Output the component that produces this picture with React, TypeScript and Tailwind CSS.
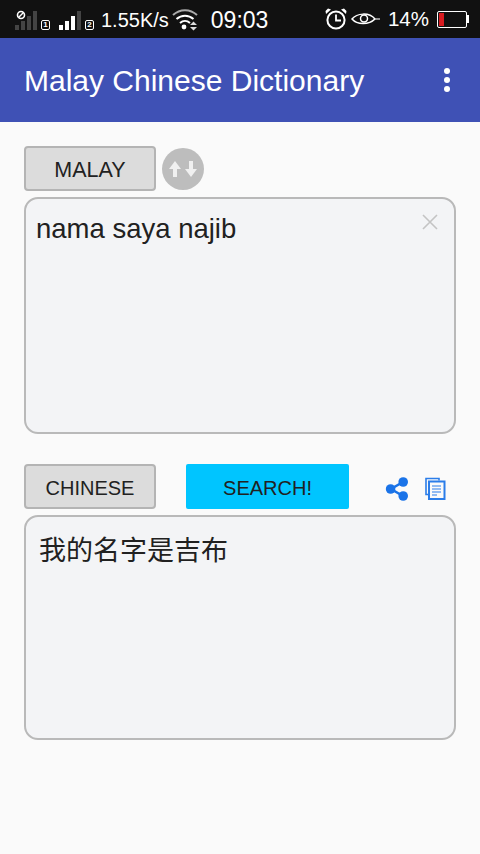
import React from "react";

const SANS = "font-['Liberation_Sans','Noto_Sans_CJK_SC',sans-serif]";

function SignalIcon({ sim, bars }: { sim: string; bars: number }) {
  const heights = [5, 9, 14, 19];
  return (
    <div className="flex items-end">
      <div className="flex items-end gap-[2px]">
        {heights.map((h, i) => (
          <svg key={i} width="4" height={h} className="block">
            <rect width="4" height={h} fill={i < bars ? "#ffffff" : "#444444"} />
          </svg>
        ))}
      </div>
      <span className="ml-[4px] flex h-[10px] w-[9px] items-center justify-center rounded-[2px] border border-white text-[8px] leading-none font-bold text-white">
        {sim}
      </span>
    </div>
  );
}

function StatusBar() {
  return (
    <div className={`relative flex h-[38px] items-center bg-[#111111] pr-[11px] pl-[15px] text-white ${SANS}`}>
      <svg width="10" height="10" viewBox="0 0 10 10" className="absolute top-[10px] left-[16px]">
        <circle cx="5" cy="5" r="3.5" fill="none" stroke="#fff" strokeWidth="1.6" />
        <path d="M2.5 7.5 7.5 2.5" stroke="#fff" strokeWidth="1.4" />
      </svg>
      <div className="mt-[2px]">
        <SignalIcon sim="1" bars={0} />
      </div>
      <div className="mt-[2px] ml-[9px]">
        <SignalIcon sim="2" bars={3} />
      </div>
      <span className="mt-[2px] ml-[7px] text-[20px] leading-none">1.55K/s</span>
      <svg width="28" height="24" viewBox="0 0 28 24" className="ml-[2px]">
        <path d="M2 8c7-6.5 17-6.5 24 0" fill="none" stroke="#aaa" strokeWidth="2" />
        <path d="M5.5 12c5-4.5 12-4.5 17 0" fill="none" stroke="#fff" strokeWidth="2" />
        <path d="M9 16c3-2.6 7-2.6 10 0" fill="none" stroke="#fff" strokeWidth="2" />
        <circle cx="13" cy="20" r="2.4" fill="#fff" />
        <path d="M19 18h7l-3.5-3.5zM19 20h7l-3.5 3.5z" fill="#ddd" />
      </svg>
      <span className="mt-[2px] ml-[12px] text-[23px] leading-none">09:03</span>
      <div className="ml-auto flex items-center">
        <svg width="24" height="24" viewBox="0 0 24 24">
          <circle cx="12" cy="13" r="8.6" fill="none" stroke="#fff" strokeWidth="2" />
          <path d="M12 7.5V13.5H17" fill="none" stroke="#fff" strokeWidth="1.8" />
          <path d="M2 7 7 2.5 4 1.5 1.5 4zM22 7 17 2.5 20 1.5 22.5 4z" fill="#fff" />
        </svg>
        <svg width="30" height="16" viewBox="0 0 30 16" className="ml-[3px]">
          <path d="M1 8C6 2 18 1 24 8 18 14 6 14 1 8Z" fill="none" stroke="#fff" strokeWidth="1.5" />
          <circle cx="13" cy="7.5" r="3.5" fill="none" stroke="#fff" strokeWidth="1.5" />
          <path d="M24 8h5" stroke="#bbb" strokeWidth="1.5" />
        </svg>
        <span className="ml-[7px] text-[20.5px] leading-none">14%</span>
        <div className="ml-[8px] flex items-center">
          <div className="flex h-[17px] w-[30px] items-stretch rounded-[2px] border border-white p-[1px]">
            <div className="w-[5px] bg-[#d81b20]" />
          </div>
          <div className="h-[8px] w-[2px] bg-white" />
        </div>
      </div>
    </div>
  );
}

function LangButton({ label, size }: { label: string; size: string }) {
  return (
    <div className={`flex h-[45px] w-[132px] items-center justify-center rounded-[4px] border-2 border-[#b4b4b4] bg-[#dcdcdc] pt-[3px] text-[#212121] ${size}`}>
      {label}
    </div>
  );
}

function SwapButton() {
  return (
    <div className="ml-[6px] flex h-[42px] w-[42px] items-center justify-center rounded-full bg-[#bdbdbd]">
      <svg width="30" height="18" viewBox="0 0 30 18">
        <path d="M7 1 1 9H5V17H9V9H13Z" fill="#f0f0f0" />
        <path d="M23 17 17 9H21V1H25V9H29Z" fill="#f0f0f0" />
      </svg>
    </div>
  );
}

function ShareIcon() {
  return (
    <svg width="24" height="24" viewBox="0 0 24 24">
      <path d="M18 5 6 12l12 7" fill="none" stroke="#1a73e8" strokeWidth="2.6" />
      <circle cx="18.2" cy="5" r="4.8" fill="#1a73e8" />
      <circle cx="5.6" cy="12" r="4.8" fill="#1a73e8" />
      <circle cx="18.2" cy="19" r="4.8" fill="#1a73e8" />
    </svg>
  );
}

function CopyIcon() {
  return (
    <svg width="22" height="24" viewBox="0 0 22 24" fill="none" stroke="#2b7de9">
      <path d="M15 3.5V1.5H2V17.5H4.5" strokeWidth="1.6" />
      <rect x="5" y="4.5" width="15.5" height="17.5" fill="#fafafa" strokeWidth="2" />
      <path d="M8 9h9M8 12h9M8 15h9M8 18h5" strokeWidth="1.2" />
    </svg>
  );
}

export default function App() {
  return (
    <div className={`flex h-[854px] w-[480px] flex-col overflow-hidden bg-[#fafafa] ${SANS}`}>
      <StatusBar />
      <div className="flex h-[84px] items-center justify-between bg-[#3f51b5] pr-[30px] pl-[24px]">
        <span className="mt-[1px] text-[30px] text-white">Malay Chinese Dictionary</span>
        <div className="flex flex-col gap-[3px]">
          <div className="h-[6px] w-[6px] rounded-full bg-white" />
          <div className="h-[6px] w-[6px] rounded-full bg-white" />
          <div className="h-[6px] w-[6px] rounded-full bg-white" />
        </div>
      </div>
      <div className="flex flex-col px-[24px] pt-[24px]">
        <div className="flex items-center">
          <LangButton label="MALAY" size="text-[21.5px]" />
          <SwapButton />
        </div>
        <div className="relative mt-[6px] h-[237px] rounded-[14px] border-2 border-[#b9b9b9] bg-[#f3f4f6] pt-[14px] pl-[10px] text-[27.5px] leading-[32px] text-[#212121]">
          nama saya najib
          <svg width="18" height="18" viewBox="0 0 18 18" className="absolute top-[14px] right-[15px]">
            <path d="M2 2 16 16M16 2 2 16" stroke="#c4c4c4" strokeWidth="1.6" />
          </svg>
        </div>
        <div className="mt-[30px] flex items-center">
          <LangButton label="CHINESE" size="text-[20px]" />
          <div className="ml-[30px] flex h-[45px] w-[163px] items-center justify-center rounded-[2px] bg-[#00c5ff] pt-[3px] text-[20px] text-[#212121]">
            SEARCH!
          </div>
          <div className="mt-[4px] ml-[36px]">
            <ShareIcon />
          </div>
          <div className="mt-[4px] ml-[15px]">
            <CopyIcon />
          </div>
        </div>
        <div className="mt-[6px] h-[225px] rounded-[14px] border-2 border-[#b9b9b9] bg-[#f3f4f6] pt-[17px] pl-[13px] text-[27px] leading-[34px] text-[#212121]">
          我的名字是吉布
        </div>
      </div>
    </div>
  );
}
